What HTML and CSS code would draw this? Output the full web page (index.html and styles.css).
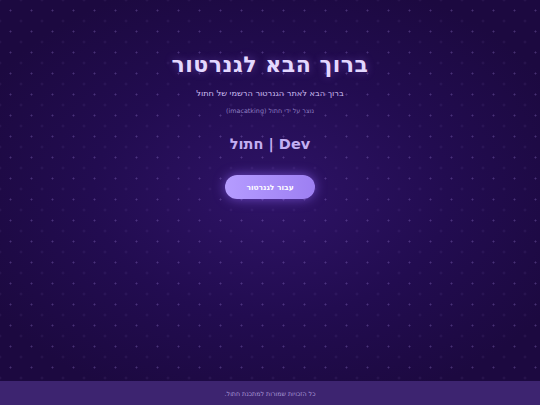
FILE: index.html
```html
<!DOCTYPE html>
<html lang="he" dir="rtl">
<head>
<meta charset="utf-8">
<title>ברוך הבא לגנרטור</title>
<link rel="stylesheet" href="styles.css">
</head>
<body>
<div class="page">
  <main class="hero">
    <h1 class="title">ברוך הבא לגנרטור</h1>
    <p class="subtitle">ברוך הבא לאתר הגנרטור הרשמי של חתול</p>
    <p class="credit">נוצר על ידי חתול (imacatking)</p>
    <h2 class="brand">Dev | חתול</h2>
    <a class="cta" href="#">עבור לגנרטור</a>
  </main>
  <footer class="footer">כל הזכויות שמורות למתכנת חתול.</footer>
</div>
</body>
</html>
```
FILE: styles.css
```css
html, body {
  margin: 0;
  padding: 0;
  height: 100%;
}
body {
  font-family: "DejaVu Sans", "Noto Sans", sans-serif;
  background-color: #1c0940;
  color: #e6dcff;
}
.page {
  min-height: 100vh;
  display: flex;
  flex-direction: column;
  background-image:
    radial-gradient(circle, rgba(170, 140, 230, 0.3) 0.8px, transparent 1.2px),
    radial-gradient(circle, rgba(170, 140, 230, 0.15) 0.8px, transparent 1.2px),
    radial-gradient(ellipse 60% 55% at 50% 48%, #2e1366 0%, #220c50 55%, #1c0940 100%);
  background-size: 21px 21px, 21px 21px, 100% 100%;
  background-position: 0 0, 10.5px 10.5px, 0 0;
}
.hero {
  flex: 1;
  display: flex;
  flex-direction: column;
  align-items: center;
  padding-top: 50px;
}
.title {
  margin: 0;
  font-size: 22px;
  font-weight: bold;
  color: #e4d8ff;
  letter-spacing: 0.5px;
  line-height: 30px;
  text-shadow: 0 0 8px rgba(160, 120, 255, 0.4);
}
.subtitle {
  margin: 7px 0 0;
  font-size: 8.2px;
  color: #cbbdf0;
  line-height: 12px;
}
.credit {
  margin: 7px 0 0;
  font-size: 6.4px;
  color: #8f7fc0;
  line-height: 10px;
}
.brand {
  margin: 17px 0 0;
  font-size: 14.5px;
  font-weight: bold;
  color: #c3aef2;
  line-height: 22px;
}
.cta {
  margin-top: 20px;
  width: 90px;
  height: 24px;
  border-radius: 12px;
  display: flex;
  align-items: center;
  justify-content: center;
  background: linear-gradient(90deg, #b59cff 0%, #9d7ff2 100%);
  box-shadow: 0 0 12px rgba(150, 110, 255, 0.6);
  color: #ffffff;
  font-size: 7.5px;
  font-weight: bold;
  text-decoration: none;
}
.footer {
  height: 24px;
  display: flex;
  align-items: center;
  justify-content: center;
  background: #3d2470;
  color: #a696d4;
  font-size: 6.3px;
}
```
